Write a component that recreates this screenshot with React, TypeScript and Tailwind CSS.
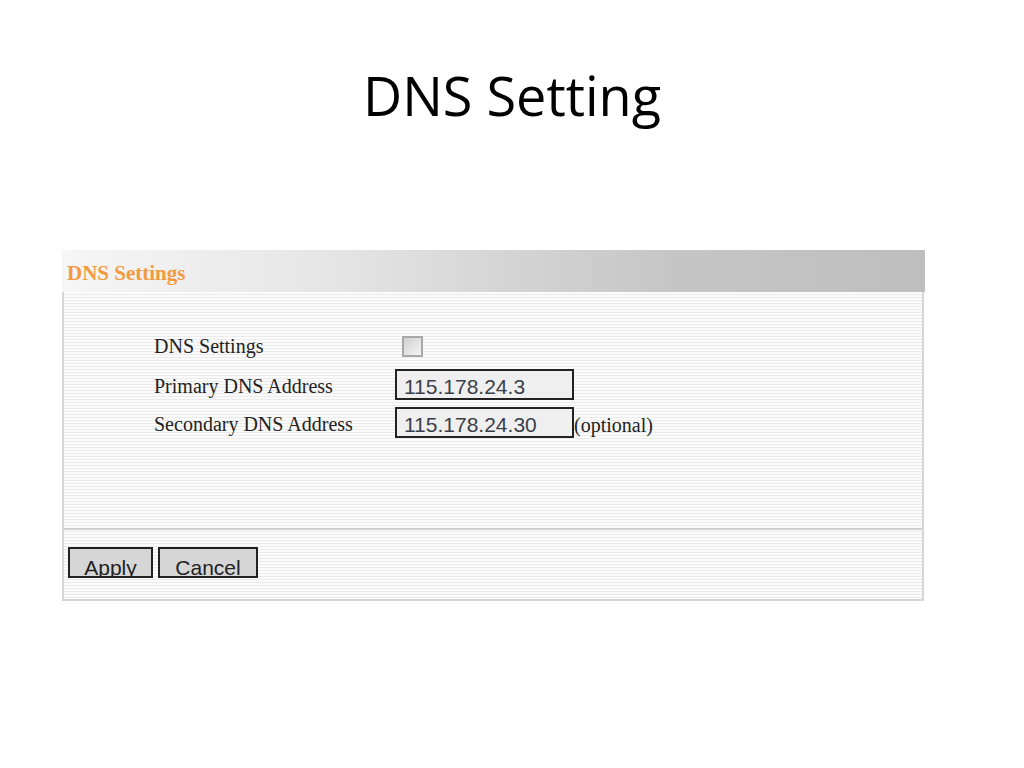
export default function App() {
  return (
    <div className="w-[1024px] h-[768px] bg-white overflow-hidden">
      <h1 className="pt-[65px] h-[250px] text-center text-[54px] leading-[60px] text-black font-['Open_Sans',sans-serif] [font-variant-ligatures:none]">
        DNS Setting
      </h1>

      <div className="ml-[62px] w-[863px]">
        <div className="h-[42px] flex items-center pl-[5px] pt-[5px] bg-[linear-gradient(to_right,#f6f6f6,#e6e6e6_30%,#c6c6c6_70%,#bebebe)] font-['Liberation_Serif',serif] font-bold text-[21px] text-[#f49a3e]">
          DNS Settings
        </div>

        <div className="w-[862px] border-l-2 border-r-2 border-b-2 border-[#d6d6d6] bg-[repeating-linear-gradient(to_bottom,#fbfbfb_0px,#fbfbfb_2px,#ebebeb_2px,#ebebeb_3px)] font-['Liberation_Serif',serif] text-[20px] text-[#222]">
          <div className="h-[236px] pt-[43px] pl-[90px] flex flex-col">
            <div className="flex items-center h-[22px]">
              <span className="w-[241px]">DNS Settings</span>
              <span className="ml-[7px] w-[21px] h-[21px] border-2 border-[#a8a8a8] bg-[linear-gradient(135deg,#d0d0d0,#f4f4f4)]" />
            </div>
            <div className="mt-[12px] flex items-center h-[31px]">
              <span className="w-[241px] pt-[2px]">Primary DNS Address</span>
              <span className="w-[179px] h-[31px] border-2 border-[#222] bg-[#efefef] pl-[7px] pt-[3px] font-['Liberation_Sans',sans-serif] text-[21px] leading-[26px] text-[#3a3f4a]">
                115.178.24.3
              </span>
            </div>
            <div className="mt-[7px] flex items-center h-[31px]">
              <span className="w-[241px] pt-[2px]">Secondary DNS Address</span>
              <span className="w-[179px] h-[31px] border-2 border-[#222] bg-[#efefef] pl-[7px] pt-[3px] font-['Liberation_Sans',sans-serif] text-[21px] leading-[26px] text-[#3a3f4a]">
                115.178.24.30
              </span>
              <span className="pt-[4px]">(optional)</span>
            </div>
          </div>

          <div className="h-[71px] border-t-2 border-[#d0d0d0] pt-[17px] pl-[4px] flex gap-[5px] font-['Liberation_Sans',sans-serif] text-[21px] text-[#222]">
            <button className="w-[85px] h-[31px] border-2 border-[#222] bg-[#d6d6d6] leading-[24px] pt-[7px] overflow-hidden">
              Apply
            </button>
            <button className="w-[100px] h-[31px] border-2 border-[#222] bg-[#d6d6d6] leading-[24px] pt-[7px] overflow-hidden">
              Cancel
            </button>
          </div>
        </div>
      </div>
    </div>
  );
}
